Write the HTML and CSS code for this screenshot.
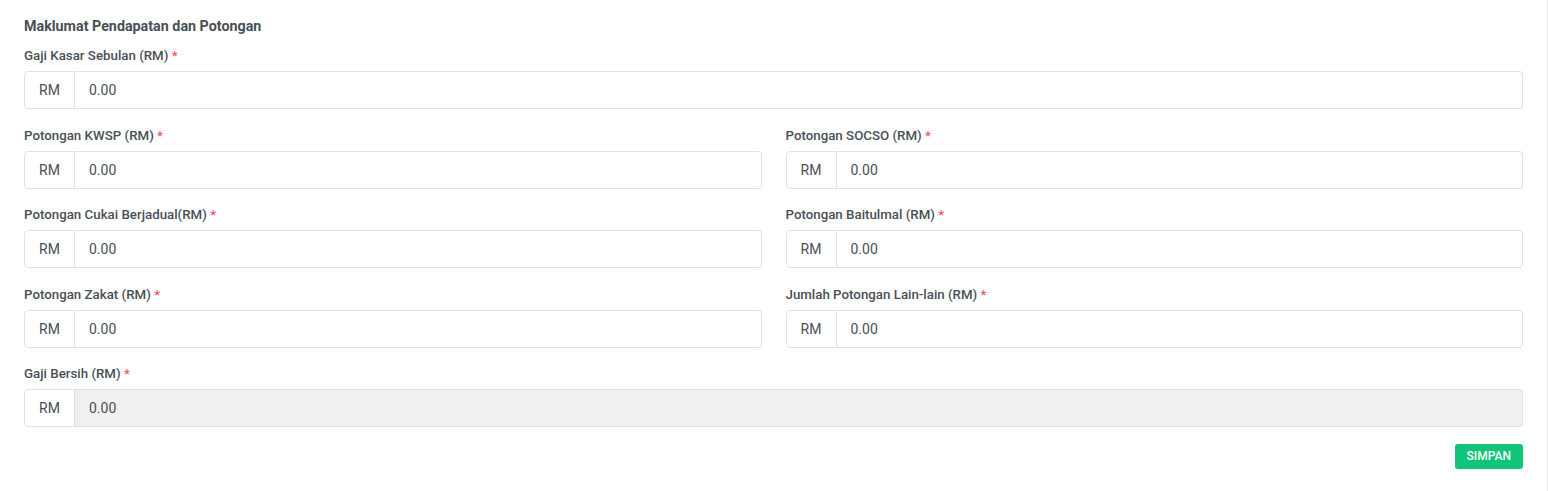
FILE: index.html
```html
<!DOCTYPE html>
<html>
<head>
<meta charset="utf-8">
<link rel="stylesheet" href="styles.css">
</head>
<body>
<div class="card">
  <h4 class="title">Maklumat Pendapatan dan Potongan</h4>
  <div class="field">
    <label class="lbl">Gaji Kasar Sebulan (RM) <span class="req">*</span></label>
    <div class="ig"><span class="pre">RM</span><input class="inp" value="0.00"></div>
  </div>
  <div class="grid">
    <div class="field">
      <label class="lbl">Potongan KWSP (RM) <span class="req">*</span></label>
      <div class="ig"><span class="pre">RM</span><input class="inp" value="0.00"></div>
    </div>
    <div class="field">
      <label class="lbl">Potongan SOCSO (RM) <span class="req">*</span></label>
      <div class="ig"><span class="pre">RM</span><input class="inp" value="0.00"></div>
    </div>
    <div class="field">
      <label class="lbl">Potongan Cukai Berjadual(RM) <span class="req">*</span></label>
      <div class="ig"><span class="pre">RM</span><input class="inp" value="0.00"></div>
    </div>
    <div class="field">
      <label class="lbl">Potongan Baitulmal (RM) <span class="req">*</span></label>
      <div class="ig"><span class="pre">RM</span><input class="inp" value="0.00"></div>
    </div>
    <div class="field">
      <label class="lbl">Potongan Zakat (RM) <span class="req">*</span></label>
      <div class="ig"><span class="pre">RM</span><input class="inp" value="0.00"></div>
    </div>
    <div class="field">
      <label class="lbl">Jumlah Potongan Lain-lain (RM) <span class="req">*</span></label>
      <div class="ig"><span class="pre">RM</span><input class="inp" value="0.00"></div>
    </div>
  </div>
  <div class="field">
    <label class="lbl">Gaji Bersih (RM) <span class="req">*</span></label>
    <div class="ig"><span class="pre">RM</span><input class="inp dis" value="0.00" disabled></div>
  </div>
  <div class="actions"><button class="btn">SIMPAN</button></div>
</div>
</body>
</html>
```
FILE: styles.css
```css
* { box-sizing: border-box; }
html, body { margin: 0; padding: 0; background: #fff; }
body { font-family: Roboto, "Noto Sans", sans-serif; color: #495057; }
.card {
  width: 1548px;
  height: 491px;
  border-right: 1px solid #e6e6e6;
  padding: 16px 24px 0 24px;
}
.title {
  margin: 0 0 10px 0;
  font-size: 14.3px;
  font-weight: 700;
  line-height: 20px;
  color: #495057;
}
.field { margin-bottom: 16.5px; }
.lbl {
  display: block;
  font-size: 13.3px;
  font-weight: 500;
  line-height: 19.5px;
  margin-bottom: 5.5px;
  color: #495057;
}
.req { color: #f1556c; }
.grid {
  display: grid;
  grid-template-columns: 1fr 1fr;
  column-gap: 24px;
}
.ig {
  display: flex;
  height: 38px;
  width: 1499px;
}
.grid .ig { width: auto; }
.pre {
  width: 51px;
  flex: none;
  display: flex;
  align-items: center;
  justify-content: center;
  border: 1px solid #e2e2e2;
  border-radius: 4px 0 0 4px;
  font-size: 14px;
  color: #495057;
  background: #fff;
}
.inp {
  flex: 1;
  min-width: 0;
  border: 1px solid #e2e2e2;
  border-left: none;
  border-radius: 0 4px 4px 0;
  padding: 0 14px;
  font-family: Roboto, "Noto Sans", sans-serif;
  font-size: 14px;
  color: #495057;
  background: #fff;
  outline: none;
}
.inp.dis { background: #f0f0f0; color: #495057; }
.actions {
  display: flex;
  justify-content: flex-end;
  width: 1499px;
}
.btn {
  height: 25px;
  padding: 0 12px;
  border: none;
  border-radius: 3px;
  background: #10c47a;
  color: #fff;
  font-family: Roboto, "Noto Sans", sans-serif;
  font-size: 12px;
  font-weight: 500;
}
```
